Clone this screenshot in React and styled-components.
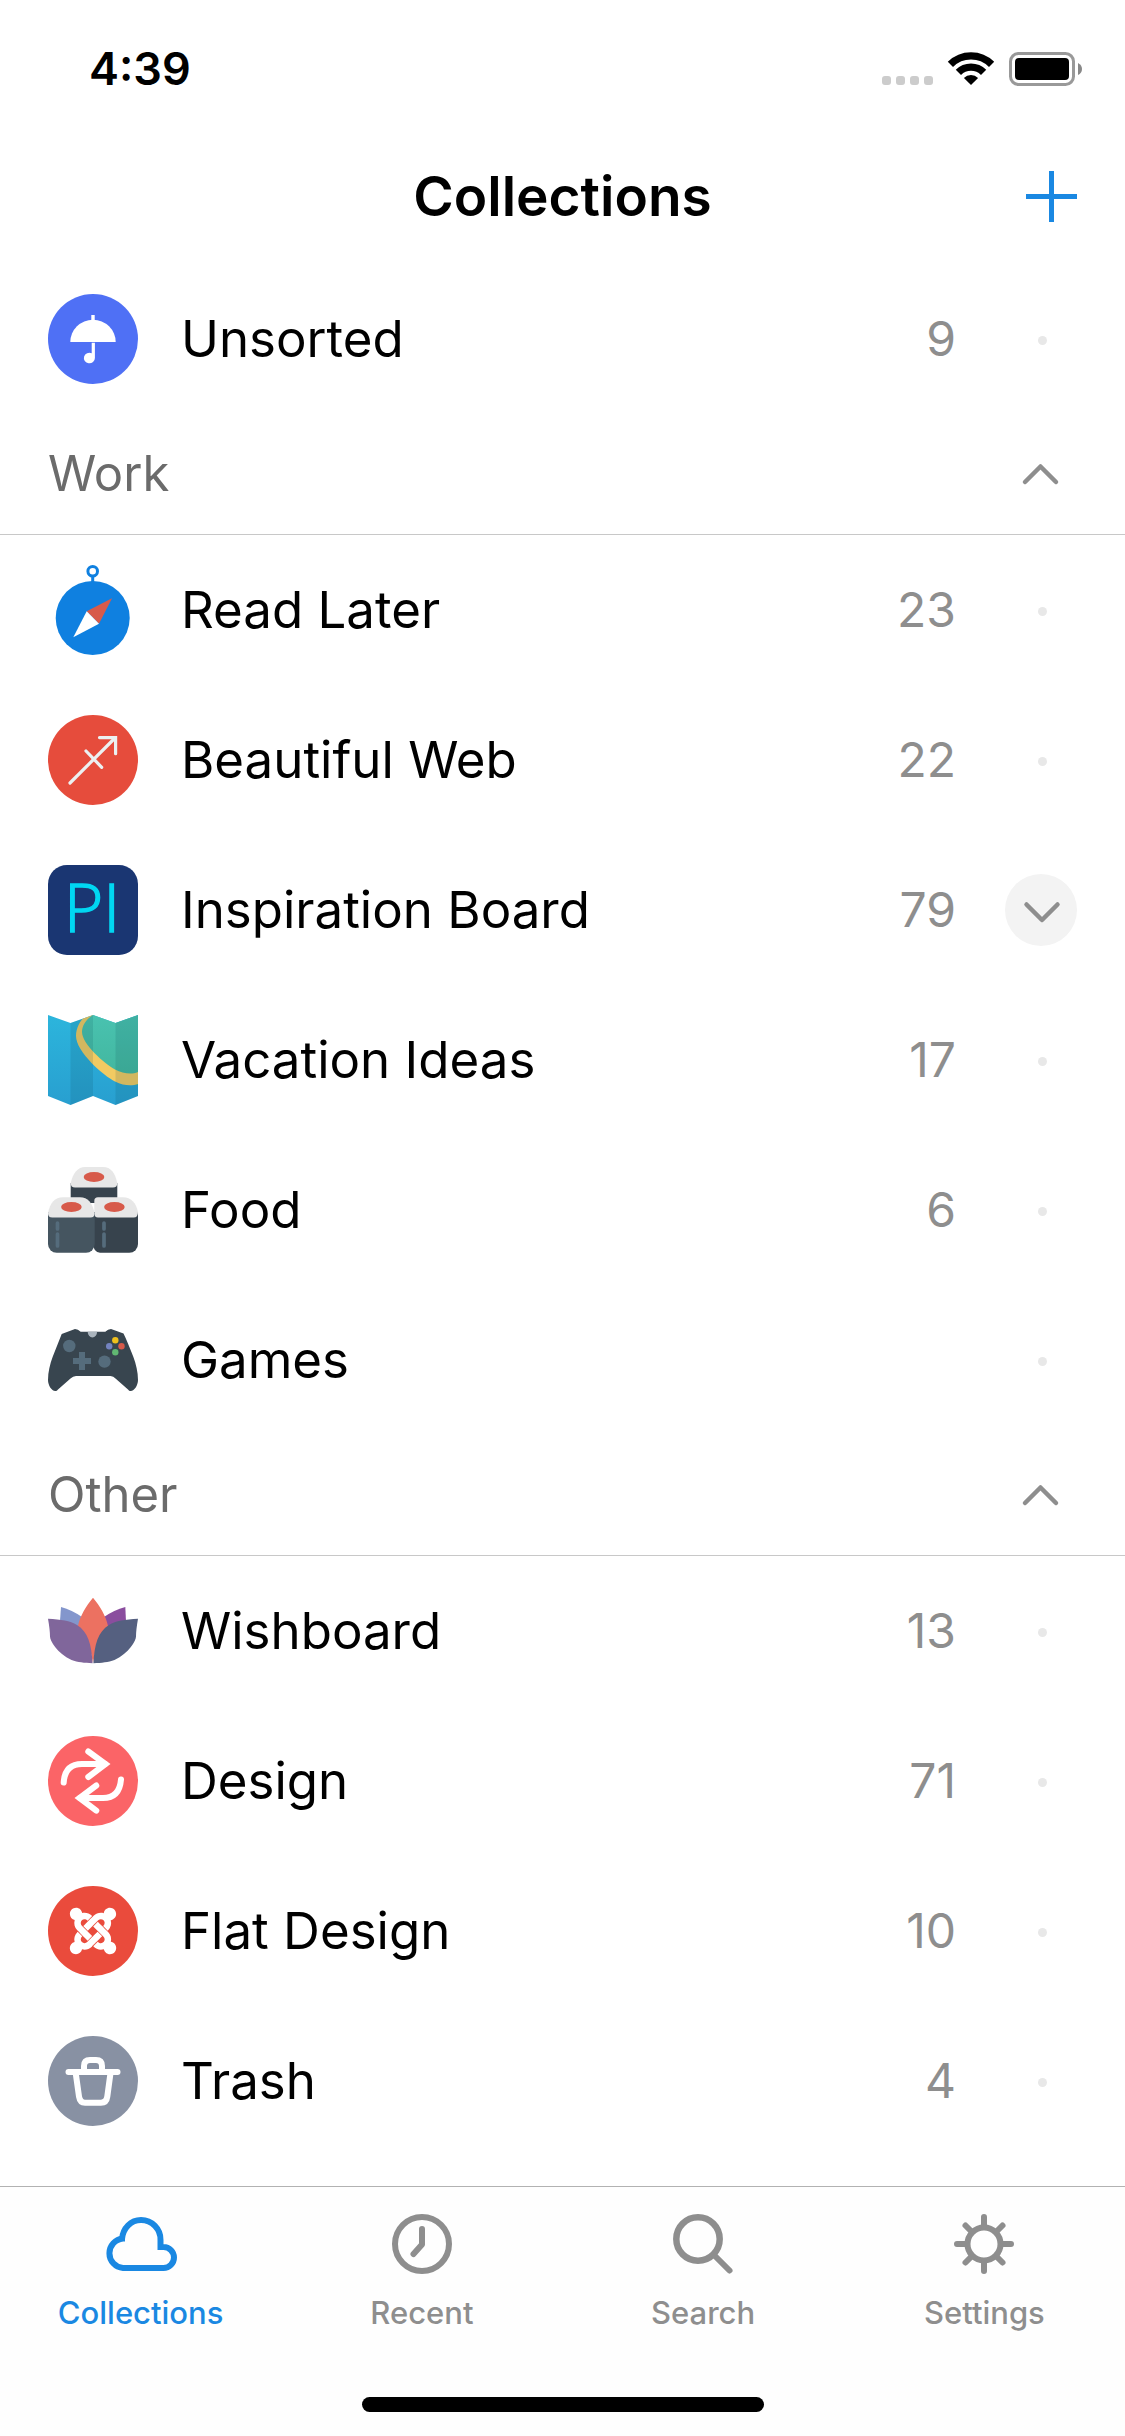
import React, { useState } from "react";
import styled, { createGlobalStyle } from "styled-components";
import { FaJoomla } from "react-icons/fa";

const GlobalStyle = createGlobalStyle`
  *, *::before, *::after { box-sizing: border-box; }
  body { margin: 0; background: #fff; }
  button { font: inherit; color: inherit; background: none; border: 0; padding: 0; cursor: pointer; }
  h1, h2, ul { margin: 0; padding: 0; font-weight: inherit; }
  svg { display: block; flex: none; overflow: visible; }
`;

const Screen = styled.div`
  display: flex;
  flex-direction: column;
  min-height: 100vh;
  background: #fff;
  color: #000;
  font-family: Inter, "Liberation Sans", sans-serif;
`;

const StatusBar = styled.div`
  display: flex;
  align-items: center;
  justify-content: space-between;
  height: 132px;
  padding: 6px 43px 0 89px;
`;

const Clock = styled.time`
  font-size: 45px;
  line-height: 54px;
  font-weight: 600;
`;

const StatusIcons = styled.div`
  display: flex;
  gap: 15px;
`;

const Header = styled.header`
  display: grid;
  grid-template-columns: 1fr auto 1fr;
  align-items: center;
  height: 132px;
  padding: 0 48px 4px;
`;

const Title = styled.h1`
  grid-column: 2;
  font-size: 55px;
  line-height: 66px;
  font-weight: 600;
`;

const AddButton = styled.button`
  justify-self: end;
  color: #1a88e2;
`;

const Main = styled.main`
  flex: 1;
`;

const List = styled.ul`
  list-style: none;
`;

const Row = styled.li`
  display: flex;
  align-items: center;
  gap: 49px;
  height: 150px;
  padding: 0 48px;
`;

const RowLink = styled.a`
  display: flex;
  flex: 1;
  align-items: center;
  min-width: 0;
  color: #000;
  text-decoration: none;
`;

const Name = styled.span`
  flex: 1;
  margin-left: 43px;
  font-size: 51px;
  line-height: 64px;
`;

const Count = styled.span`
  font-size: 48px;
  line-height: 60px;
  color: #8e8e8e;
`;

const Toggle = styled.button`
  width: 72px;
  height: 72px;
  border-radius: 50%;
  background: #f3f3f3;
  color: #8e8e8e;
`;

const SectionHeader = styled.div`
  display: flex;
  align-items: center;
  justify-content: space-between;
  height: 121px;
  padding: 0 48px;
  border-bottom: 1px solid #c8c8c8;
`;

const SectionTitle = styled.h2`
  font-size: 49px;
  line-height: 60px;
  color: #6b6b6b;
`;

const SectionToggle = styled.button`
  color: #8e8e8e;
`;

const BottomBar = styled.footer`
  display: flex;
  flex-direction: column;
  align-items: center;
  justify-content: space-between;
  height: 250px;
  padding: 27px 0 24px;
  border-top: 1px solid #b2b2b2;
  background: #fefefe;
`;

const Tabs = styled.nav`
  display: grid;
  grid-template-columns: repeat(4, 1fr);
  width: 100%;
`;

const Tab = styled.a`
  display: flex;
  flex-direction: column;
  align-items: center;
  gap: 21px;
  color: ${(p) => (p.$active ? "#1a88e2" : "#8e8e8e")};
  font-size: 31px;
  line-height: 36px;
  font-weight: 500;
  text-decoration: none;
`;

const HomeIndicator = styled.div`
  width: 402px;
  height: 15px;
  border-radius: 8px;
  background: #000;
`;

/* Collection icons, all on a 90 x 90 grid */

const Art = ({ children }) => (
  <svg width="90" height="90" viewBox="0 0 90 90" fill="none" aria-hidden="true">
    {children}
  </svg>
);

const Umbrella = () => (
  <Art>
    <circle cx="45" cy="45" r="45" fill="#4f70f5" />
    <path d="M22.3 48a22.7 22.3 0 0 1 45.4 0Z" fill="#fff" />
    <path d="M43.3 21h3.4v6h-3.4Z" fill="#fff" />
    <path d="M43.7 48.7h3.2V64a5.5 5.3 0 1 1-3.2-4.8Z" fill="#fff" />
  </Art>
);

const Compass = () => (
  <Art>
    <circle cx="44.7" cy="53" r="37" fill="#0f80e0" />
    <circle cx="44.7" cy="6.3" r="4.8" stroke="#0f80e0" strokeWidth="3" />
    <path d="M43.2 11h3v6h-3Z" fill="#0f80e0" />
    <path d="M64 33.3 38.7 46.3 51 58.7Z" fill="#d75a4a" />
    <path d="M38.7 46.3 25.3 72.3 51 58.7Z" fill="#fff" />
  </Art>
);

const Sagittarius = () => (
  <Art>
    <circle cx="45" cy="45" r="45" fill="#e64c3c" />
    <g stroke="#ecf0f1" strokeWidth="3.2" strokeLinecap="round">
      <path d="M22 68 67 23" />
      <path d="M51.5 22.6H67.6V38.7" />
      <path d="M38 36 53.7 52.3" />
    </g>
  </Art>
);

const Board = () => (
  <Art>
    <rect width="90" height="90" rx="19" fill="#1a3672" />
    <text x="16" y="67" fill="#00d7f2" stroke="#00d7f2" strokeWidth="1.5" fontFamily="'Open Sans', sans-serif" fontWeight="300" fontSize="67">
      PI
    </text>
  </Art>
);

const MapIcon = () => (
  <Art>
    <defs>
      <linearGradient id="sea" x1="0" y1="0" x2="0" y2="1">
        <stop offset="0" stopColor="#2cb5dc" />
        <stop offset="1" stopColor="#289fd0" />
      </linearGradient>
      <linearGradient id="land" x1="0" y1="0" x2="0" y2="1">
        <stop offset="0" stopColor="#49c2b0" />
        <stop offset="1" stopColor="#41b59c" />
      </linearGradient>
      <clipPath id="sheet">
        <path d="M0 0 22.5 8 45 0 67.5 8 90 0V81L67.5 90 45 81 22.5 90 0 81Z" />
      </clipPath>
    </defs>
    <g clipPath="url(#sheet)">
      <path d="M0 0H90V90H0Z" fill="url(#sea)" />
      <path d="M45 0H90V70H82C66 68 28 40 31 18C32 9 38 3 45 0Z" fill="url(#land)" />
      <path
        d="M45 0H39C33 4 28 12 28 21C28 37 56 61 67 66.500C76 71 84 71 90 69V57C83 60 75 58.500 67 54.500C57 49 34 29 34 17C34 11 38 4 45 0Z"
        fill="#f1ca62"
      />
      <path d="M22.500 0H45V90H22.500ZM67.500 0H90V90H67.500Z" fill="#0a3c50" fillOpacity="0.13" />
    </g>
  </Art>
);

const Sushi = () => (
  <Art>
    <path d="M22.700 18H69.300V38H22.700Z" fill="#37434d" />
    <path d="M22.700 18C25 8 30 2 37 2H55C63 2 67 8 69.300 18Q69.300 22.500 65 22.500H27Q22.700 22.500 22.700 18Z" fill="#e7e7e7" />
    <ellipse cx="46" cy="12" rx="10.300" ry="5" fill="#d75a4a" />
    <path d="M45.500 47H90V79a8.700 8.700 0 0 1-8.700 8.700H52Q45.500 87 45.500 80Z" fill="#37434d" />
    <path d="M46.300 36Q46.300 32.300 50 32.300H75C83 32.300 88 38 90 47Q90 52.500 85.700 52.500H50Q46.300 52.500 46.300 48Z" fill="#e7e7e7" />
    <path d="M0 47H46.700V79a8.700 8.700 0 0 1-8.700 8.700H8.700A8.700 8.700 0 0 1 0 79Z" fill="#455560" />
    <path d="M0 48C2 38 7 32.300 15 32.300H32C40 32.300 44 38 46.700 48Q46.700 52.500 42.500 52.500H4.300Q0 52.500 0 48Z" fill="#e7e7e7" />
    <ellipse cx="23.400" cy="42" rx="10.300" ry="5" fill="#d75a4a" />
    <ellipse cx="66.400" cy="42" rx="10.300" ry="5" fill="#d75a4a" />
    <path d="M9.500 58v6M9.500 69v12M56 58v6M56 69v12" stroke="#556c7c" strokeWidth="3.700" strokeLinecap="round" />
  </Art>
);

const Gamepad = () => (
  <Art>
    <path
      d="M13.700 19 27 14Q30 14 32.700 16.700H57.300Q60 14 63 14L75.500 18.500Q77 21 85.300 41.700C88 49 90 57 90 65C90 70 86.500 76 82.700 76C81.500 76 81 75.500 80 74.500L67.500 63.500Q65.500 61 62.500 61H28Q25 61 22.500 63.500L10 74.500C9 75.500 8.500 76 7.300 76C3.500 76 0 70 0 65C0 57 2 49 4.700 41.700Z"
      fill="#38454f"
    />
    <path d="M39.700 16.700a4.700 5.800 0 0 0 9.400 0Z" fill="#aab4bd" />
    <g fill="#556c7c">
      <circle cx="21.300" cy="31" r="6.200" />
      <circle cx="56.500" cy="46.600" r="6.200" />
      <path d="M31 37h6v6h6v6h-6v6h-6v-6h-6v-6h6Z" />
    </g>
    <circle cx="67.300" cy="25.300" r="3.200" fill="#efc01d" />
    <circle cx="73.500" cy="31.300" r="3.200" fill="#d75a4a" />
    <circle cx="67.300" cy="37.300" r="3.200" fill="#61b872" />
    <circle cx="61.200" cy="31.300" r="3.200" fill="#7383bf" />
  </Art>
);

const Lotus = () => (
  <Art>
    <path d="M13 21Q24 24 34 31V42H11.500Z" fill="#8396cc" />
    <path d="M77.300 21Q66 24 56 31V42H78.300Z" fill="#8a4d9e" />
    <path d="M45 11.700C52 20 58 30 60 40L50 60Q46 68 45 77Q44 68 40 60L30 40C32 30 38 20 45 11.700Z" fill="#ec7161" />
    <path d="M0 32.700C13 33.500 22 34.500 29 39C40 46 43.500 58 44.600 77.300C36 76.700 30 76.500 23.500 74C9 67 2 55 2 50.500Q2 44 0 32.700Z" fill="#80669b" />
    <path d="M90 32.700C77 33.500 68 34.500 61 39C50 46 46.500 58 45.400 77.300C54 76.700 60 76.500 66.500 74C81 67 88 55 88 50.500Q88 44 90 32.700Z" fill="#556080" />
  </Art>
);

const Swap = () => (
  <Art>
    <circle cx="45" cy="45" r="45" fill="#fb6467" />
    <g stroke="#fff" strokeWidth="6" strokeLinecap="round">
      <path d="M15.700 46.500C16.500 34 23 28 34 28H57" />
      <path d="M40.300 15.500 57.500 28 40.300 41" />
      <path d="M73 43.500C72 56 66 62 55 62H32" />
      <path d="M48.300 49.500 31.500 62 48.300 74.700" />
    </g>
  </Art>
);

const Knot = () => (
  <Art>
    <circle cx="45" cy="45" r="45" fill="#ea4b3c" />
    <FaJoomla x="18.500" y="18.500" size={53} color="#fff" />
  </Art>
);

const Bin = () => (
  <Art>
    <circle cx="45" cy="45" r="45" fill="#8891a3" />
    <g stroke="#fff" strokeWidth="6" strokeLinecap="round">
      <path d="M20.500 36H69.500" />
      <path d="M36 35V30Q36 24 42 24H48Q54 24 54 30V35" />
      <path d="M27.700 37 31 60.500Q32 66.700 37 66.700H53Q58.500 66.700 59.300 60.500L62.500 37" />
    </g>
  </Art>
);

/* Controls */

const Leaf = () => (
  <svg width="72" height="72" viewBox="0 0 72 72" aria-hidden="true">
    <circle cx="37.500" cy="37.500" r="4.500" fill="#e8e8e8" />
  </svg>
);

const Chevron = ({ up }) => (
  <svg width="72" height="72" viewBox="0 0 72 72" fill="none" stroke="currentColor" strokeWidth="4.500" strokeLinecap="round" strokeLinejoin="round" aria-hidden="true">
    <path d={up ? "M20 44 35.500 28.500 51 44" : "M21.500 30.500 37 46 52.500 30.500"} />
  </svg>
);

const Plus = () => (
  <svg width="51" height="51" viewBox="0 0 51 51" fill="currentColor" aria-hidden="true">
    <path d="M23 0h5v23h23v5H28v23h-5V28H0v-5h23Z" />
  </svg>
);

const Signal = () => (
  <svg width="51" height="34" viewBox="0 0 51 34" fill="#ccc" aria-hidden="true">
    {[0, 14, 28, 42].map((x) => (
      <rect key={x} x={x} y="24" width="9" height="9" rx="3" />
    ))}
  </svg>
);

const Wifi = () => (
  <svg width="46" height="34" viewBox="0 0 46 34" fill="none" stroke="#000" strokeWidth="7.400" aria-hidden="true">
    <path d="M2.400 12.400A29.200 29.200 0 0 1 43.600 12.400" />
    <path d="M10.400 20.400A17.800 17.800 0 0 1 35.600 20.400" />
    <path d="M15.900 25.900A10 10 0 0 1 30.100 25.900L23 33Z" fill="#000" stroke="none" />
  </svg>
);

const Battery = () => (
  <svg width="73" height="34" viewBox="0 0 73 34" aria-hidden="true">
    <rect x="1.500" y="1.500" width="63" height="31" rx="8" fill="none" stroke="#999" strokeWidth="3" />
    <rect x="6" y="6" width="54" height="22" rx="4" />
    <path d="M69 11Q73 13 73 17T69 23Z" fill="#888" />
  </svg>
);

const TabArt = ({ width = 60, children }) => (
  <svg width={width} height="60" viewBox={`0 0 ${width} 60`} fill="none" stroke="currentColor" strokeWidth="6" strokeLinecap="round" aria-hidden="true">
    {children}
  </svg>
);

const CloudIcon = () => (
  <TabArt width={72}>
    <path strokeLinecap="butt" d="M17 27.500V25C18 14 26 6 36 6A19.500 19.500 0 0 1 55.500 26V33H58.500A10.500 10.500 0 0 1 58.500 54H18A14.800 14.800 0 0 1 18 24.500" />
  </TabArt>
);

const ClockIcon = () => (
  <TabArt>
    <circle cx="30" cy="30" r="27" />
    <path d="M30 15V30.500L21.500 40" strokeLinejoin="round" />
  </TabArt>
);

const SearchIcon = () => (
  <TabArt>
    <circle cx="25" cy="25" r="21.700" strokeWidth="6.500" />
    <path d="M42 42 56.500 56.500" />
  </TabArt>
);

const GearIcon = () => (
  <TabArt>
    <circle cx="30" cy="30" r="16.500" />
    <path d="M30 3V12M30 48V57M3 30H12M48 30H57M11.500 11.500 17 17M43 43 48.500 48.500M48.500 11.500 43 17M17 43 11.500 48.500" />
  </TabArt>
);

const unsorted = { name: "Unsorted", count: 9, Icon: Umbrella };

const sections = [
  {
    title: "Work",
    items: [
      { name: "Read Later", count: 23, Icon: Compass },
      { name: "Beautiful Web", count: 22, Icon: Sagittarius },
      { name: "Inspiration Board", count: 79, Icon: Board, nested: true },
      { name: "Vacation Ideas", count: 17, Icon: MapIcon },
      { name: "Food", count: 6, Icon: Sushi },
      { name: "Games", Icon: Gamepad },
    ],
  },
  {
    title: "Other",
    items: [
      { name: "Wishboard", count: 13, Icon: Lotus },
      { name: "Design", count: 71, Icon: Swap },
      { name: "Flat Design", count: 10, Icon: Knot },
      { name: "Trash", count: 4, Icon: Bin },
    ],
  },
];

const tabs = [
  { label: "Collections", Icon: CloudIcon },
  { label: "Recent", Icon: ClockIcon },
  { label: "Search", Icon: SearchIcon },
  { label: "Settings", Icon: GearIcon },
];

function CollectionRow({ name, count, Icon, nested }) {
  return (
    <Row>
      <RowLink href="#">
        <Icon />
        <Name>{name}</Name>
        {count !== undefined && <Count>{count}</Count>}
      </RowLink>
      {nested ? (
        <Toggle type="button" aria-label={`Expand ${name}`}>
          <Chevron />
        </Toggle>
      ) : (
        <Leaf />
      )}
    </Row>
  );
}

function Section({ title, items }) {
  const [open, setOpen] = useState(true);
  return (
    <section>
      <SectionHeader>
        <SectionTitle>{title}</SectionTitle>
        <SectionToggle type="button" aria-label={`Toggle ${title}`} aria-expanded={open} onClick={() => setOpen(!open)}>
          <Chevron up={open} />
        </SectionToggle>
      </SectionHeader>
      {open && (
        <List>
          {items.map((item) => (
            <CollectionRow key={item.name} {...item} />
          ))}
        </List>
      )}
    </section>
  );
}

export default function App() {
  const [active, setActive] = useState("Collections");
  return (
    <Screen>
      <GlobalStyle />
      <StatusBar>
        <Clock>4:39</Clock>
        <StatusIcons>
          <Signal />
          <Wifi />
          <Battery />
        </StatusIcons>
      </StatusBar>
      <Header>
        <Title>Collections</Title>
        <AddButton type="button" aria-label="Add collection">
          <Plus />
        </AddButton>
      </Header>
      <Main>
        <List>
          <CollectionRow {...unsorted} />
        </List>
        {sections.map((section) => (
          <Section key={section.title} {...section} />
        ))}
      </Main>
      <BottomBar>
        <Tabs>
          {tabs.map(({ label, Icon }) => (
            <Tab key={label} href="#" $active={label === active} onClick={() => setActive(label)}>
              <Icon />
              {label}
            </Tab>
          ))}
        </Tabs>
        <HomeIndicator />
      </BottomBar>
    </Screen>
  );
}
